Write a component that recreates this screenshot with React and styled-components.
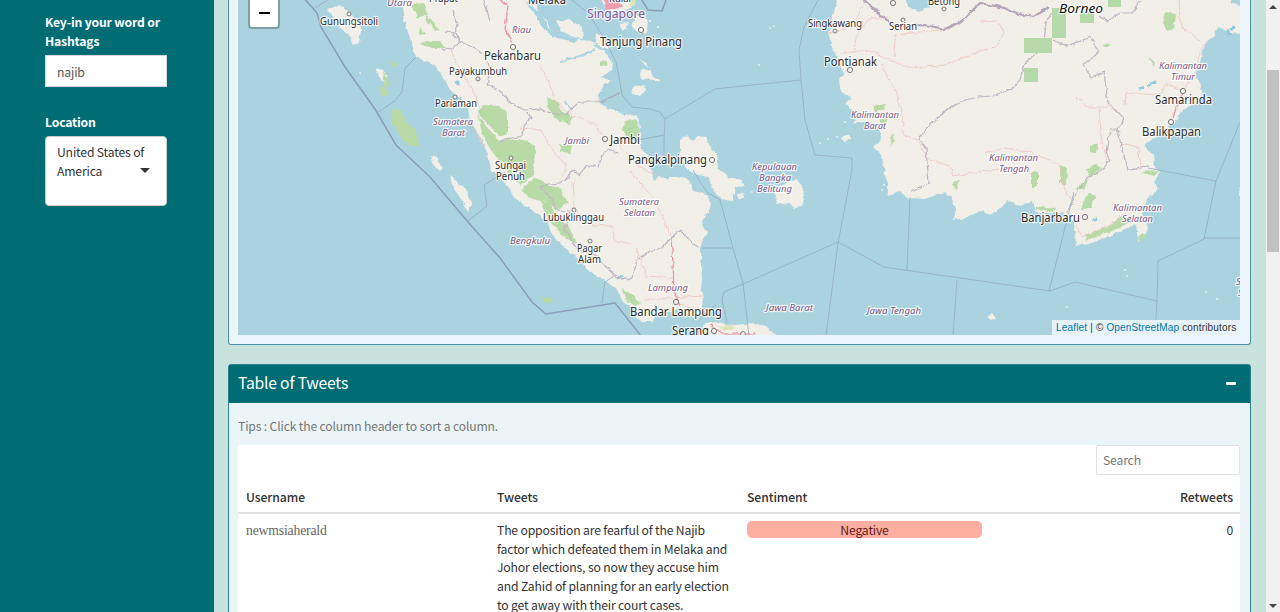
import React from 'react';
import styled, { createGlobalStyle } from 'styled-components';

const Global = createGlobalStyle`
  * { box-sizing: border-box; }
  html, body { margin: 0; height: 100%; overflow: hidden; }
  body {
    font-family: "Noto Sans CJK SC", "Noto Sans", sans-serif;
    font-size: 12.2px;
    line-height: 18.8px;
    letter-spacing: -0.17px;
    color: #333;
  }
`;

const Page = styled.div`
  display: flex;
  width: 1280px;
  height: 612px;
  overflow: hidden;
  background: #c8e3dd;
`;

const Sidebar = styled.aside`
  width: 214px;
  flex: none;
  padding: 13px 47px 0 45px;
  background: #006d75;
`;

const Field = styled.div`
  margin-bottom: ${(p) => p.$gap || 0}px;
`;

const FieldLabel = styled.label`
  display: block;
  margin-bottom: ${(p) => p.$space || 4}px;
  font-weight: 700;
  color: #fff;
`;

const TextBox = styled.div`
  height: 32px;
  padding: 7px 11px;
  background: #fff;
  border: 1px solid #d2d6de;
  color: #555;
`;

const SelectBox = styled.div`
  display: flex;
  align-items: flex-start;
  justify-content: space-between;
  height: 70px;
  padding: 6px 16px 0 11px;
  background: #fff;
  border: 1px solid #ccc;
  border-radius: 4px;
`;

const SelectText = styled.span`
  width: 92px;
  white-space: nowrap;
  margin-right: -12px;
`;

const Caret = styled.span`
  margin-top: 25px;
  border: 5px solid transparent;
  border-top-color: #333;
  border-bottom: 0;
`;

const Content = styled.main`
  width: 1052px;
  flex: none;
  padding: 0 15px 0 14px;
`;

const MapCard = styled.section`
  height: 345px;
  margin-bottom: 19px;
  padding: 0 10px 9px 9px;
  background: #ebf6fb;
  border: 1px solid #4b91a4;
  border-top: 0;
  border-radius: 0 0 3px 3px;
`;

const MapFrame = styled.div`
  position: relative;
  width: 1002px;
  height: 335px;
  overflow: hidden;
  background: #aad3df;
`;

const ZoomOut = styled.div`
  position: absolute;
  left: 10px;
  top: -4px;
  width: 32px;
  height: 33px;
  display: flex;
  align-items: center;
  justify-content: center;
  background: #fff;
  background-clip: padding-box;
  border: 2px solid rgba(0, 0, 0, 0.25);
  border-radius: 4px;
  &::after {
    content: "";
    width: 11px;
    height: 2px;
    background: #000;
  }
`;

const Attribution = styled.div`
  position: absolute;
  right: 0;
  bottom: 0;
  width: 188px;
  height: 15px;
  padding-left: 4px;
  font: 10px/15px "Liberation Sans", sans-serif;
  letter-spacing: 0.17px;
  white-space: nowrap;
  color: #333;
  background: rgba(255, 255, 255, 0.7);
`;

const MapLink = styled.span`
  color: #0078a8;
`;

const TableCard = styled.section`
  height: 300px;
  background: #ebf5f8;
  border: 1px solid #2c8191;
  border-radius: 3px 3px 0 0;
`;

const CardHeader = styled.header`
  display: flex;
  align-items: center;
  justify-content: space-between;
  height: 38px;
  padding: 0 14px 2px 9px;
  font-size: 15.7px;
  letter-spacing: -0.2px;
  color: #fff;
  background: #006d75;
`;

const CollapseMark = styled.span`
  width: 10px;
  height: 3px;
  border-radius: 1px;
  background: #fff;
`;

const CardBody = styled.div`
  padding: 14px 10px 0 9px;
`;

const Tip = styled.p`
  margin: 0 0 9px;
  color: #777;
`;

const TablePanel = styled.div`
  height: 230px;
  background: #fff;
`;

const SearchRow = styled.div`
  display: flex;
  justify-content: flex-end;
  height: 37px;
`;

const SearchBox = styled.div`
  width: 144px;
  height: 30px;
  padding: 5px 6px;
  color: #777;
  border: 1px solid #dfe3e6;
  border-radius: 2px;
`;

const Row = styled.div`
  display: grid;
  grid-template-columns: 252px 250px 251px 249px;
`;

const HeadRow = styled(Row)`
  height: 32px;
  border-bottom: 2px solid #e2e2e2;
  font-weight: 500;
`;

const Cell = styled.div`
  padding: 7px 7px 0 ${(p) => (p.$first ? 8 : 7)}px;
  white-space: nowrap;
  text-align: ${(p) => (p.$right ? 'right' : 'left')};
  ${HeadRow} & { padding-top: 6px; letter-spacing: -0.08px; }
`;

const UserName = styled.span`
  font-family: "Liberation Serif", serif;
  font-size: 13.7px;
  color: #666;
`;

const Pill = styled.div`
  width: 235px;
  height: 17px;
  border-radius: 5px;
  line-height: 19px;
  text-align: center;
  color: #5c1c1c;
  background: #ffafa2;
`;

const Scrollbar = styled.div`
  display: flex;
  flex-direction: column;
  align-items: center;
  width: 14px;
  flex: none;
  padding: 5px 0 4px;
  background: #f1f1f1;
`;

const Arrow = styled.span`
  border: 4px solid transparent;
  ${(p) => (p.$up ? 'border-bottom-color: #444; border-top: 0;' : 'border-top-color: #444; border-bottom: 0; margin-top: auto;')}
`;

const Thumb = styled.div`
  width: 12px;
  height: 182px;
  margin-top: 61px;
  background: #c1c1c1;
`;

const land = [
  'M400 -4L404 20L410 38L416 57L424 60L436 66L443 78L450 90L460 98L468 108L470 120L476 130L484 145L488 155L491 170L505 182L513 195L520 203L535 212L548 222L552 235L562 245L575 256L585 266L597 277L607 282L617 290L622 300L632 308L637 319L645 322L653 322L655 314L670 311L680 307L690 315L698 320L701 314L703 300L701 290L703 270L700 250L703 240L708 232L702 225L706 215L711 205L707 194L693 191L690 179L676 176L659 176L653 180L651 165L645 152L640 145L641 135L638 115L625 114L610 110L600 103L598 95L605 85L612 80L600 78L612 70L613 62L608 55L600 49L590 44L584 40L575 38L560 36L550 29L545 18L538 8L532 -4Z',
  'M556 20L569 20L583 27L584 38L574 37L561 31Z M586 40L596 43L591 48L585 46Z M596 32L605 39L612 48L603 49L595 42Z',
  'M600 -4L634 -4L632 6L620 13L606 10Z M635 17L648 18L647 33L640 34L632 27Z M619 24L629 23L623 30Z',
  'M643 67L650 71L653 75L661 81L654 81L648 78L642 80L640 74Z M633 87L645 84L646 90L640 96L632 94Z M638 57L646 64L652 69L645 65Z',
  'M680 141L688 135L692 142L698 135L706 136L709 145L716 155L718 168L728 176L741 180L744 186L736 187L733 196L733 201L720 199L713 188L708 177L695 174L685 167L680 157Z M737 194L744 193L745 198L739 199Z',
  'M775 191L785 182L797 180L804 188L802 205L795 208L788 203L776 205L778 197Z',
  'M328 9L340 5L350 13L358 21L361 30L359 43L354 45L349 36L338 25Z M431 155L437 157L438 162L444 168L440 171L434 166Z M450 176L453 178L458 185L463 186L468 194L472 203L469 212L464 205L461 198L456 193Z M376 68L382 70L388 77L384 82L379 77Z',
  'M838 -4L832 20L829 33L831 45L836 57L842 65L843 75L839 80L841 92L851 97L846 103L850 110L862 113L853 124L868 121L879 128L882 138L873 147L882 155L885 175L888 184L888 196L900 191L908 198L925 199L945 192L951 197L956 209L954 220L965 218L980 211L990 215L1000 208L1007 200L1020 206L1033 201L1036 213L1063 213L1074 222L1076 246L1088 244L1110 236L1136 224L1138 242L1144 239L1148 227L1142 214L1148 199L1158 190L1155 180L1160 172L1155 167L1154 156L1144 146L1156 136L1175 123L1182 109L1197 103L1203 95L1200 85L1196 75L1200 62L1205 43L1215 35L1218 27L1228 33L1244 34L1244 7L1232 3L1230 -4Z',
  'M704 324L716 322L732 325L746 324L756 323L766 326L772 332L782 339L698 339Z M842 137L847 135L851 139L845 141Z M987 317L992 313L996 318L991 320Z M1240 187L1244 188L1244 198L1239 195Z',
];

const parks = [
  'M483 105L500 106L508 114L508 133L500 136L490 126L482 119L477 112Z M477 114L487 127L500 140L520 139L535 146L534 174L521 186L513 178L498 160L484 139Z M521 190L535 177L548 185L561 189L568 203L558 210L545 202L529 198Z M541 201L551 205L557 219L567 223L577 244L566 239L557 230L548 219Z M547 98L556 101L562 111L573 117L570 124L558 120L549 111Z',
  'M625 122L636 119L640 130L638 141L628 139L622 130Z M560 144L572 146L570 153L560 152Z M600 61L608 61L607 66L600 65Z M622 289L633 295L641 304L635 306L625 299Z M424 14L433 22L440 31L436 30L426 21Z M425 41L440 41L445 48L430 48L421 44Z M411 5L425 4L427 14L418 18Z M420 27L426 34L418 35Z',
  'M392 109L401 109L406 122L415 130L420 146L410 146L400 135L392 123Z M382 72L388 80L387 94L382 96L380 90L384 84Z M388 61L400 63L393 67Z M541 297L551 298L553 302L546 303Z',
  'M1024 38H1052V53H1024Z M1052 8H1066V38H1052Z M1080 12H1094V23H1080Z M1108 -2H1121V7H1108Z M1024 68H1038V82H1024Z',
  'M1165 12L1176 14L1174 28L1168 32L1164 25Z M874 105L885 104L884 111L874 111Z M880 120L888 119L887 123L880 123Z M1031 172H1038V187H1031Z M1060 165L1067 168L1066 185L1060 184Z M1087 169L1095 164L1102 168L1089 177Z M1082 202L1090 193L1096 196L1091 207L1082 210Z M1085 235L1108 227L1121 215L1125 221L1130 222L1115 230L1096 236L1086 241Z M1140 172L1159 171L1153 176Z M1138 237L1144 233L1147 237L1139 242Z M1036 206L1055 209L1053 212L1036 210Z M1075 188L1088 179L1084 190Z M952 184L959 180L956 190Z M892 133L895 142L890 146Z M1102 45L1110 43L1108 47L1102 47Z M1148 57L1155 62L1154 67Z M1090 146L1098 143L1097 152L1090 153Z',
];

const provinces = [
  'M490 22L483 -4M453 10L458 26L453 35L460 41L476 49L482 54M444 32L456 33L460 41L452 50L440 49M488 60L490 75L488 84L500 91L510 102L524 110L540 109L550 113L565 115L579 102L602 102L620 92M526 111L531 118L524 126L523 136L505 139L499 142M565 180L573 170L579 175L587 165L598 167L602 155L607 150L618 153M540 187L548 184L560 183L569 178L572 170M540 187L552 199L558 210L570 211L565 230L577 249L597 257L609 270L615 275L622 280L633 277L637 260L649 251L662 248L671 238L680 230L692 243L700 248',
  'M980 97L992 96L1012 89L1020 80L1024 63L1043 50L1046 23L1053 12M1053 40L1067 46L1091 37L1098 52L1083 65L1091 77L1104 72L1108 103L1124 118L1118 130L1110 130L1106 152L1110 160L1102 170L1088 177L1078 190L1067 213M1118 130L1122 150L1128 169L1148 166M980 97L965 100L945 110L938 118L918 137L926 148L927 162L929 183L911 191M1100 15L1108 21L1120 13L1132 13L1140 0',
];
const borders = [
  'M862 -2L875 10L887 20L897 26L925 25L945 29L962 21L971 12L980 3L1005 8L1019 14L1034 17L1048 7',
];
const roads = [
  'M496 -2L508 5L505 30L512 43M450 48L460 70L472 88L480 108M470 120L483 145M540 65L550 85L556 102L573 116L593 123L602 135M520 128L541 130L548 143L557 156L566 164L562 178M573 182L575 210L590 225L612 226L615 241L632 245M630 171L651 196L662 215L671 238L674 265L673 290L679 305L702 309M645 300L702 296M636 247L646 276L673 278M620 145L638 166L657 175M710 325L724 334L756 334',
  'M842 53L870 50L890 60L912 68L945 65L980 51M882 65L889 80L896 90L902 115L904 135L918 140L928 159L950 166L953 176L1000 169M1076 96L1087 107L1108 107L1120 113M1099 109L1102 142L1107 160M1125 105L1126 93L1160 95L1167 84L1182 91L1171 120M1200 41L1180 25L1179 -2M1205 40L1199 55L1195 75L1183 90M829 34L855 25L864 0M855 50L858 32L870 18L892 17M894 56L895 35L920 32L950 29M985 153L1005 148L1030 152L1045 158L1060 166L1065 190L1074 205M1074 220L1082 237L1110 225L1130 209M1120 143L1138 147L1141 166M980 22L998 21L1004 33L998 46L980 51',
];
const maritime = [
  'M315 8L331 -2M378 112L395 101L402 92L405 68L416 57M468 221L487 206L484 185L505 172M602 303L605 282L614 276M568 -3L588 13L604 38L612 54L616 62L620 82L622 95L632 107L650 109L660 112L665 119L664 140L664 158M620 93L600 102M665 119L715 89L743 86L801 80M633 141L664 135M818 0L804 27L799 50L801 80L805 120L815 155L852 158L852 170L838 243L826 336M702 248L732 248M722 300L724 292L743 284L838 242L884 267L1050 291L1075 282L1157 301M910 197L907 270M957 280L953 336M1074 192L1049 291M1157 301L1155 336M1157 301L1158 261L1204 239L1216 181L1148 168M1216 181L1240 122M1204 238H1240M693 170L700 182L708 193L720 200L726 222L733 248L743 283L749 336M722 300L727 323M698 322L706 312L716 305',
];
const seaBorders = ['M303 -3L317 13L321 27L345 67L375 109L396 145L430 177L468 222L500 258L532 302L546 314L615 303L642 337', 'M640 -3L648 10L662 11L666 0'];

const labels = [
  ['Utara', 387, 6, 25, 9.5, 'p'],
  ['Prapat', 429, 2, 29, 10],
  ['Melaka', 528, 4, 38, 11.5],
  ['Gunungsitoli', 320, 25, 58, 10],
  ['Riau', 512, 33, 19, 9.5, 'p'],
  ['Pekanbaru', 484, 60, 57, 12],
  ['Payakumbuh', 449, 75, 58, 10],
  ['Pariaman', 435, 107, 42, 10],
  ['Sumatera', 433, 125, 40, 9.5, 'p'],
  ['Barat', 442, 136, 23, 9.5, 'p'],
  ['Kulai', 609, 2, 22, 9],
  ['Singapore', 587, 18, 58, 12, 's'],
  ['Tanjung Pinang', 600, 46, 82, 12],
  ['Jambi', 565, 144, 24, 9.5, 'p'],
  ['Jambi', 610, 144, 30, 12],
  ['Pangkalpinang', 628, 164, 79, 12],
  ['Sungai', 495, 169, 31, 10],
  ['Penuh', 496, 180, 29, 10],
  ['Sumatera', 619, 205, 40, 9.5, 'p'],
  ['Selatan', 624, 216, 31, 9.5, 'p'],
  ['Lubuklinggau', 543, 221, 61, 10],
  ['Bengkulu', 510, 244, 40, 9.5, 'p'],
  ['Pagar', 577, 252, 25, 10],
  ['Alam', 578, 263, 23, 10],
  ['Lampung', 648, 291, 40, 9.5, 'p'],
  ['Bandar Lampung', 630, 316, 92, 12],
  ['Serang', 672, 335, 37, 12],
  ['Kepulauan', 752, 170, 45, 9.5, 'p'],
  ['Bangka', 759, 181, 32, 9.5, 'p'],
  ['Belitung', 757, 192, 35, 9.5, 'p'],
  ['Jawa Barat', 766, 311, 47, 9.5, 'p'],
  ['Jawa Tengah', 867, 314, 54, 9.5, 'p'],
  ['Singkawang', 808, 27, 54, 10],
  ['Serian', 889, 30, 28, 10],
  ['Betong', 928, 5, 32, 10],
  ['Pontianak', 824, 66, 53, 12],
  ['Borneo', 1059, 13, 44, 12.5, 'b'],
  ['Kalimantan', 851, 118, 48, 9.5, 'p'],
  ['Barat', 864, 129, 22, 9.5, 'p'],
  ['Kalimantan', 1159, 69, 48, 9.5, 'p'],
  ['Timur', 1171, 80, 24, 9.5, 'p'],
  ['Samarinda', 1155, 104, 57, 12],
  ['Balikpapan', 1142, 136, 59, 12],
  ['Kalimantan', 989, 161, 49, 9.5, 'p'],
  ['Tengah', 999, 172, 30, 9.5, 'p'],
  ['Banjarbaru', 1021, 222, 59, 12],
  ['Kalimantan', 1113, 211, 49, 9.5, 'p'],
  ['Selatan', 1122, 222, 31, 9.5, 'p'],
  ['S', 1236, 285, 5, 9.5, 'p'],
  ['S', 1238, 296, 5, 9.5, 'p'],
];

const towns = [
  [349, 14, 2], [513, 47, 2.6], [478, 79, 2], [455, 97, 2], [641, 30, 2.6], [605, 139, 2.6], [712, 160, 2.6],
  [511, 158, 2], [574, 210, 2], [590, 241, 2], [676, 302, 2.6], [714, 331, 2.6], [743, 334, 2.4], [835, 31, 2], [903, 20, 2],
  [893, 3, 2.6], [944, 9, 2], [850, 70, 2.6], [1183, 91, 2.6], [1171, 122, 2.6], [1085, 217, 2.6],
];

const MapLabel = styled.text`
  font-family: "Noto Sans", sans-serif;
  letter-spacing: 0;
  font-size: ${(p) => p.$size}px;
  font-style: ${(p) => (p.$kind === 'p' || p.$kind === 'b' ? 'italic' : 'normal')};
  fill: ${(p) => ({ p: '#7b5a86', s: '#815599', b: '#111' }[p.$kind] || '#2c2c2c')};
  stroke: rgba(255, 255, 255, 0.75);
  stroke-width: 2.4px;
  stroke-linejoin: round;
  paint-order: stroke;
`;

function MapDrawing() {
  return (
    <svg width="1002" height="335" viewBox="238 0 1002 335" style={{ display: 'block' }}>
      <defs>
        <filter id="rough" filterUnits="userSpaceOnUse" x="230" y="-10" width="1020" height="355">
          <feTurbulence type="fractalNoise" baseFrequency="0.15" numOctaves="3" seed="4" />
          <feDisplacementMap in="SourceGraphic" scale="4.5" xChannelSelector="R" yChannelSelector="G" />
        </filter>
      </defs>
      <g filter="url(#rough)">
        {land.map((d, i) => <path key={i} d={d} fill="#f2efe9" />)}
        {[0, 1, 2, 4].map((i) => <path key={i} d={parks[i]} fill={i === 2 ? '#b9d9a5' : '#b8daa7'} />)}
        <path d="M479 116L490 128L500 141" stroke="#f2efe9" strokeWidth="1.5" fill="none" />
        <path d="M905 -4L928 -4L930 6L919 12L909 6Z M525 2L542 12L548 28L561 36L580 39L575 42L552 37L542 27L535 13Z" fill="#aad3df" />
        <path d="M560 61L580 56L596 49M572 110L565 101M659 165L653 178M655 176L668 177M693 176L699 187M1151 194L1143 208" stroke="#aad3df" strokeWidth="2" fill="none" />
        <path d="M1147 86L1155 82M1140 89L1144 87M1226 30L1231 35M1229 29L1235 27M617 278L623 276M456 80L459 85M1093 220L1097 218" stroke="#8fc9dc" strokeWidth="3" fill="none" />
        <path d="M603 -2L618 -2L622 8L606 10Z" fill="#ee9daf" />
        <path d="M629 -2L637 -2L636 6L630 6Z M718 326L730 325L736 328L725 332Z" fill="#dbe4b4" />
        {roads.map((d, i) => <path key={i} d={d} fill="none" stroke="#f0c4bc" strokeWidth=".8" />)}
        <path d="M671 238L673 264L674 290L680 306M1182 94L1173 118M710 325L724 334L756 334M498 -2L508 5L505 30L512 42" fill="none" stroke="#e5929d" strokeWidth="1.1" />
        {provinces.map((d, i) => <path key={i} d={d} fill="none" stroke="#c0b3c3" strokeWidth="1.2" />)}
        {borders.map((d, i) => <path key={i} d={d} fill="none" stroke="#b5a3b9" strokeWidth="2.2" />)}
      </g>
      <path d={parks[3]} fill="#b5d9a9" />
      {maritime.map((d, i) => <path key={i} d={d} fill="none" stroke="#95a9c2" strokeWidth=".8" />)}
      {seaBorders.map((d, i) => <path key={i} d={d} fill="none" stroke="#8c9dbb" strokeWidth="1.5" />)}
      {[[770, 28], [774, 26], [759, 65], [828, 139], [837, 137], [820, 143], [845, 122], [1125, 270], [1127, 276], [1067, 307], [1206, 292], [1217, 299], [884, 185], [882, 190], [752, 192], [595, 9], [650, 21], [658, 27], [360, 73]].map(([x, y]) => (
        <circle key={`${x}-${y}`} cx={x} cy={y} r="1.1" fill="#e4ecea" />
      ))}
      {towns.map(([x, y, r]) => (
        <circle key={`${x}-${y}`} cx={x} cy={y} r={r} fill="#f7f3ed" stroke="#777" strokeWidth="1" />
      ))}
      {labels.map(([text, x, y, w, size, kind], i) => (
        <MapLabel key={i} x={x} y={y} textLength={w} lengthAdjust="spacingAndGlyphs" $size={size} $kind={kind}>{text}</MapLabel>
      ))}
    </svg>
  );
}

export default function App() {
  return (
    <>
      <Global />
      <Page>
        <Sidebar>
          <Field $gap={26}>
            <FieldLabel>Key-in your word or<br />Hashtags</FieldLabel>
            <TextBox>najib</TextBox>
          </Field>
          <Field>
            <FieldLabel $space={5}>Location</FieldLabel>
            <SelectBox>
              <SelectText>United States of<br />America</SelectText>
              <Caret />
            </SelectBox>
          </Field>
        </Sidebar>
        <Content>
          <MapCard>
            <MapFrame>
              <MapDrawing />
              <ZoomOut />
              <Attribution>
                <MapLink>Leaflet</MapLink> | © <MapLink>OpenStreetMap</MapLink> contributors
              </Attribution>
            </MapFrame>
          </MapCard>
          <TableCard>
            <CardHeader>
              <span>Table of Tweets</span>
              <CollapseMark />
            </CardHeader>
            <CardBody>
              <Tip>Tips : Click the column header to sort a column.</Tip>
              <TablePanel>
                <SearchRow><SearchBox>Search</SearchBox></SearchRow>
                <HeadRow>
                  <Cell $first>Username</Cell>
                  <Cell>Tweets</Cell>
                  <Cell>Sentiment</Cell>
                  <Cell $right>Retweets</Cell>
                </HeadRow>
                <Row>
                  <Cell $first><UserName>newmsiaherald</UserName></Cell>
                  <Cell>
                    The opposition are fearful of the Najib<br />
                    factor which defeated them in Melaka and<br />
                    Johor elections, so now they accuse him<br />
                    and Zahid of planning for an early election<br />
                    to get away with their court cases.
                  </Cell>
                  <Cell><Pill>Negative</Pill></Cell>
                  <Cell $right>0</Cell>
                </Row>
              </TablePanel>
            </CardBody>
          </TableCard>
        </Content>
        <Scrollbar>
          <Arrow $up />
          <Thumb />
          <Arrow />
        </Scrollbar>
      </Page>
    </>
  );
}
